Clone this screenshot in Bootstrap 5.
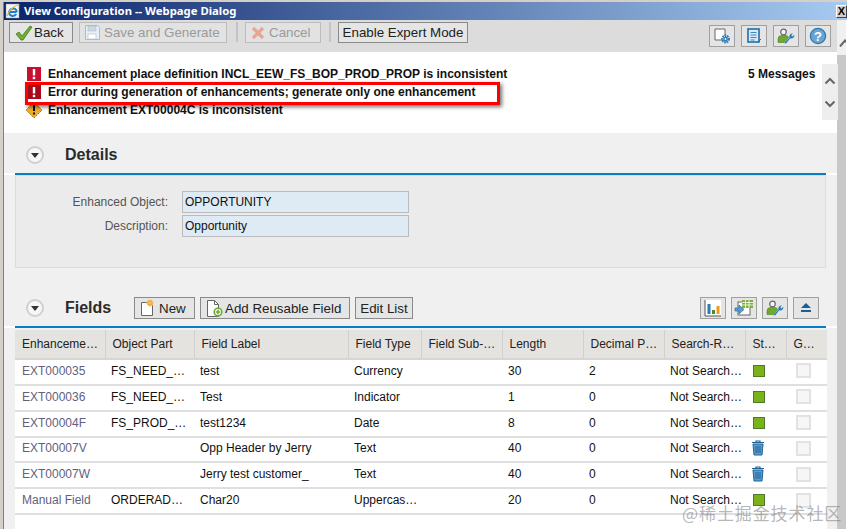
<!DOCTYPE html>
<html lang="en">
<head>
<meta charset="utf-8">
<title>View Configuration</title>
<link href="https://cdn.jsdelivr.net/npm/bootstrap@5.3.0/dist/css/bootstrap.min.css" rel="stylesheet">
<style>
html,body{margin:0;height:529px;overflow:hidden;background:#fff}
body{font-family:"Liberation Sans",Arial,sans-serif;font-size:12px;color:#000}
.shell{height:529px;position:relative;border-top:2px solid #d4d0c8;border-left:3px solid #d4d0c8;overflow:hidden}
.titlebar{height:18px;flex:none;background:linear-gradient(90deg,#0a246a,#a6caf0);color:#fff;font:700 11.3px/18px "Noto Sans","Liberation Sans",sans-serif;padding-left:1px;border-left:1px solid #808080}
.titlebar svg{flex:none;margin-right:3px}
.closebox{width:11px;height:13px;background:#d4d0c8;border:1px solid #fff;border-right-color:#404040;border-bottom-color:#404040;margin-left:auto;color:#000;font:700 11px/11px "Liberation Sans",sans-serif;text-align:center}
.pane{min-width:0;width:834px;flex:none;border-left:1px solid #808080}
.vtrack{flex:none;width:9px;background:#f0f0f0;display:flex;flex-direction:column;overflow:hidden}
.vhead{height:35px;flex:none;padding-top:17px}
.vbody{flex:1;background:#c8c8c8}
.tools{height:32px;background:#dcdcdc;padding:2px 6px 0 5px;align-items:flex-start}
.sapbtn{--bs-btn-padding-x:4px;--bs-btn-padding-y:0;--bs-btn-font-size:13.33px;--bs-btn-line-height:19px;--bs-btn-border-radius:0;--bs-btn-color:#222;--bs-btn-bg:#e5e5e5;--bs-btn-border-color:#8a8a8a;--bs-btn-hover-bg:#e5e5e5;--bs-btn-hover-border-color:#8a8a8a;--bs-btn-hover-color:#222;height:21px;display:inline-flex;align-items:center;gap:3px;white-space:nowrap;font-family:"Liberation Sans",Arial,sans-serif}
.sapbtn.faded{--bs-btn-color:#999;--bs-btn-border-color:#bcbcbc;--bs-btn-disabled-color:#9a9a9a;--bs-btn-disabled-bg:#e2e2e2;--bs-btn-disabled-border-color:#bcbcbc;--bs-btn-disabled-opacity:1}
.btn-back{width:64px;margin-right:6px;gap:0}
.btn-save{width:148px}
.btn-cancel{width:76px}
.btn-expert{width:130px;justify-content:center}
.btn-new{width:61px;gap:2px}
.btn-add{width:150px;gap:1px}
.btn-edit{width:58px;justify-content:center}
.sepbar{width:2px;height:20px;background:#c4c4c4;margin:0 7px 0 8px;flex:none}
.sepfirst{margin-left:9px}
.iconbtn{--bs-btn-padding-x:0;width:26px;height:22px;justify-content:center;--bs-btn-border-color:#a0a0a0}
.sidetools{margin-left:auto;gap:6px;margin-top:3px}
.msgs{height:81px;background:#fff;position:relative;padding:13px 0 0 23px;font-weight:700;line-height:18px;color:#111}
.msgline{height:18px;align-items:center;gap:7px}
.msgline svg{flex:none}
.msgcount{position:absolute;left:744px;top:13px}
.msgscroll{position:absolute;left:818px;top:12px;width:16px;height:56px;background:#eee;display:flex;flex-direction:column;align-items:center;gap:15px;padding-top:13px}
.callout{position:absolute;left:21px;top:30px;width:475px;height:23px;border:3px solid #f00;box-shadow:2px 2px 4px rgba(0,0,0,.55)}
.secthead{background:#f0f0f0;padding-left:22px;align-items:center;gap:21px}
.detailshead{height:40px;padding-top:4px}
.secttitle{font:700 16px/20px "Liberation Sans",Arial,sans-serif;color:#2b2b2b;margin:0}
.bluerule{height:2px;background:#0a7cc4;margin:0 11px;flex:none}
.outer{background:#f0f0f0}
.detailbox{margin:0 11px;height:93px;background:#ebebeb;border:1px solid #dcdcdc;padding-top:15px}
.formline{display:flex;align-items:center;height:22px;margin-bottom:2px}
.formline label{width:152px;text-align:right;color:#555;flex:none}
.valuebox{width:227px;height:22px;margin-left:14px;background:#deeaf4;border:1px solid #bbb;padding:0 2px;line-height:20px;color:#111}
.fieldshead{height:58px;padding-top:22px;position:relative;gap:0}
.fieldshead .secttitle{width:69px;margin-left:21px}
.fieldbtns{gap:5px}
.fieldbtns .sapbtn{height:22px}
.fieldshead .sidetools{margin:0 18px 0 auto;gap:5px}
.gridarea{padding:0 11px;height:201px;background:linear-gradient(90deg,#f0f0f0 11px,#fff 11px,#fff 823px,#f0f0f0 823px)}
.sheet{table-layout:fixed;width:812px;margin:0;--bs-table-bg:transparent;font-size:12px;line-height:14px;border-collapse:collapse}
.sheet th{background:#e5e3df;font-weight:400;height:30px;padding:0 2px 0 7px;border:0;border-right:1px solid #d2d0cc;border-top:2px solid #f0f0f0;border-bottom:2px solid #d8d6d2;color:#222;white-space:nowrap;vertical-align:middle}
.sheet th:last-child{border-right:0}
.sheet td{height:25.85px;padding:0 2px 2px 6px;border:0;border-bottom:2px solid #dfdfdf;white-space:nowrap;vertical-align:middle;color:#111}
.sheet td:first-child{padding-left:7px;color:#5f5f80}
.sheet td.mid{padding-left:8px}
.statusok{display:block;width:12px;height:12px;background:#7ab317;border:1px solid #4f7a2a}
.tickbox{display:block;width:15px;height:15px;background:#f6f6f6;border:2px solid #e2e2e2;margin-left:4px}
.stampmark{position:absolute;left:679px;top:501px;font:17px/20px "Noto Sans CJK SC","Noto Sans",sans-serif;color:rgba(120,120,120,.55);letter-spacing:.9px;white-space:nowrap;pointer-events:none}
.roundtoggle{width:18px;height:18px;border-radius:50%;background:#f7f7f7;border:2px solid #d0d0d0;display:flex;align-items:center;justify-content:center;flex:none}
.roundtoggle i{display:block;width:0;height:0;border:4px solid transparent;border-top:5px solid #333;border-bottom:0}
</style>
</head>
<body>
<div class="shell d-flex flex-column">
  <div class="titlebar d-flex align-items-center">
    <svg width="16" height="16" viewBox="0 0 16 16"><rect x="1" y="1" width="13" height="14" fill="#f4f4f4" stroke="#999" stroke-width=".5"/><path d="M3 9h8M4.200 8.800A4 4 0 0 1 11.500 7.500V9.500M11.300 11A4 4 0 0 1 4 10" fill="none" stroke="#1a7fd6" stroke-width="2"/><path d="M2 13C5 5 11 2 14.500 2" fill="none" stroke="#e9b93a" stroke-width="1.200"/></svg>
    <span>View Configuration -- Webpage Dialog</span>
    <span class="closebox">X</span>
  </div>
  <div class="d-flex flex-grow-1" style="min-height:0">
    <div class="pane">
      <div class="tools d-flex">
        <button class="btn sapbtn btn-back" type="button"><svg width="20" height="18" viewBox="0 0 20 18"><path d="M2 10l3-2 3 4L16 2l2 1-9 13H7z" fill="#6fb12c" stroke="#3d7a1c" stroke-width=".8"/></svg>Back</button>
        <button class="btn sapbtn faded btn-save" type="button" disabled><svg width="17" height="17" viewBox="0 0 17 17"><path d="M1.500 1.500h12l2 2v12h-14z" fill="#e8eff5" stroke="#a9bccb"/><rect x="4" y="2" width="8" height="5" fill="#c9d8e4" stroke="#a9bccb" stroke-width=".6"/><rect x="4" y="10" width="8" height="5" fill="#fff" stroke="#a9bccb" stroke-width=".6"/></svg>Save and Generate</button>
        <span class="sepbar sepfirst"></span>
        <button class="btn sapbtn faded btn-cancel" type="button" disabled><svg width="16" height="16" viewBox="0 0 16 16"><path d="M3 3l10 10M13 3L3 13" stroke="#e8a593" stroke-width="3.200"/></svg>Cancel</button>
        <span class="sepbar"></span>
        <button class="btn sapbtn btn-expert" type="button">Enable Expert Mode</button>
        <div class="sidetools d-flex">
          <button class="btn sapbtn iconbtn" type="button" aria-label="Settings"><svg width="18" height="16" viewBox="0 0 18 16"><path d="M11 12H2V1h10v7" fill="#fff" stroke="#666"/><circle cx="12.500" cy="11" r="3.200" fill="none" stroke="#2a7ab5" stroke-width="2.400" stroke-dasharray="1.600 .7"/><circle cx="12.500" cy="11" r="2.200" fill="#2a7ab5"/><circle cx="12.500" cy="11" r=".9" fill="#fff"/></svg></button>
          <button class="btn sapbtn iconbtn" type="button" aria-label="Notes"><svg width="16" height="16" viewBox="0 0 16 16"><rect x="2" y="1" width="11" height="13" fill="#dbe9f5" stroke="#1f6ea9" stroke-width="1.600"/><path d="M4.500 4.500h6M4.500 7h6M4.500 9.500h6M4.500 12h4" stroke="#3b86bd"/><path d="M12 14l3-3" stroke="#1f6ea9"/></svg></button>
          <button class="btn sapbtn iconbtn" type="button" aria-label="Personalize"><svg width="18" height="17" viewBox="0 0 18 17"><circle cx="6.500" cy="4" r="2.800" fill="#f4f4f4" stroke="#666" stroke-width="1.200"/><path d="M1 14.500V11q0-3.500 3.500-3.500h4.500q2 0 2.500 2L7 14.500z" fill="#6ea92e" stroke="#4c7f1d" stroke-width=".6"/><path d="M7 15l5.500-5.500a3 3 0 0 1 3.500-4l-1.800 1.800 1.300 1.300 1.800-1.800a3 3 0 0 1-4 3.500L9 15.500z" fill="#2a7ab5"/></svg></button>
          <button class="btn sapbtn iconbtn" type="button" aria-label="Help"><svg width="18" height="18" viewBox="0 0 18 18"><circle cx="9" cy="9" r="7.600" fill="#6aa4d4" stroke="#2f78b0" stroke-width="1.300"/><text x="9" y="13.500" text-anchor="middle" font-family="Liberation Sans" font-weight="700" font-size="13" fill="#fff">?</text></svg></button>
        </div>
      </div>
      <div class="msgs">
        <div class="msgline d-flex"><svg width="14" height="14" viewBox="0 0 14 14"><rect width="14" height="14" fill="#c8102e"/><path d="M7 2v6.500" stroke="#fff" stroke-width="2.400"/><rect x="5.800" y="9.800" width="2.400" height="2.400" fill="#fff"/></svg><span>Enhancement place definition INCL_EEW_FS_BOP_PROD_PROP is inconsistent</span></div>
        <div class="msgline d-flex"><svg width="14" height="14" viewBox="0 0 14 14"><rect width="14" height="14" fill="#a60a1c"/><path d="M7 2v6.500" stroke="#fff" stroke-width="2.400"/><rect x="5.800" y="9.800" width="2.400" height="2.400" fill="#fff"/></svg><span>Error during generation of enhancements; generate only one enhancement</span></div>
        <div class="msgline d-flex"><svg width="14" height="18" viewBox="0 0 14 18" style="overflow:visible"><path d="M7 1L15 9 7 17-1 9z" fill="#f0ac2b" stroke="#8a6410" stroke-width=".8" stroke-dasharray="2 1"/><path d="M7 4v6" stroke="#111" stroke-width="2"/><rect x="6" y="11.500" width="2" height="2" fill="#111"/></svg><span>Enhancement EXT00004C is inconsistent</span></div>
        <div class="msgcount">5 Messages</div>
        <div class="msgscroll">
          <svg width="12" height="8" viewBox="0 0 12 8"><path d="M1.500 6.500L6 2l4.500 4.500" fill="none" stroke="#666" stroke-width="2"/></svg>
          <svg width="12" height="8" viewBox="0 0 12 8"><path d="M1.500 1.500L6 6l4.500-4.500" fill="none" stroke="#666" stroke-width="2"/></svg>
        </div>
        <div class="callout"></div>
      </div>
      <div class="d-flex secthead detailshead"><span class="roundtoggle"><i></i></span><h2 class="secttitle">Details</h2></div>
      <div class="bluerule"></div>
      <div class="outer">
        <div class="detailbox">
          <div class="formline"><label>Enhanced Object:</label><div class="valuebox">OPPORTUNITY</div></div>
          <div class="formline"><label>Description:</label><div class="valuebox">Opportunity</div></div>
        </div>
      </div>
      <div class="d-flex secthead fieldshead"><span class="roundtoggle"><i></i></span><h2 class="secttitle">Fields</h2>
        <div class="d-flex fieldbtns">
          <button class="btn sapbtn btn-new" type="button"><svg width="18" height="18" viewBox="0 0 18 18"><path d="M2.500 3.500h8l3 3v10h-11z" fill="#fff" stroke="#666"/><circle cx="11" cy="4" r="3" fill="#f5a623"/><path d="M11 0v8M7 4h8" stroke="#f7c465"/></svg>New</button>
          <button class="btn sapbtn btn-add" type="button"><svg width="19" height="18" viewBox="0 0 19 18"><path d="M2.500 1.500h7l4 4v12h-11z" fill="#fff" stroke="#666"/><path d="M9.500 1.500v4h4" fill="none" stroke="#666"/><circle cx="13" cy="13" r="3.800" fill="#fff" stroke="#6ea92e" stroke-width="1.600"/><path d="M10.800 13h4.400M13 10.800v4.400" stroke="#6ea92e" stroke-width="1.500"/></svg>Add Reusable Field</button>
          <button class="btn sapbtn btn-edit" type="button">Edit List</button>
        </div>
        <div class="sidetools d-flex">
          <button class="btn sapbtn iconbtn" type="button" aria-label="Chart"><svg width="18" height="17" viewBox="0 0 18 17"><rect x="1" y="0" width="16" height="16" fill="#fff"/><path d="M1 0v16h16" fill="none" stroke="#555"/><rect x="3.500" y="4" width="3" height="10" fill="#2a7ab5"/><rect x="8" y="10" width="3" height="4" fill="#4c8a2e"/><rect x="12.500" y="6" width="3" height="8" fill="#ee9a1a"/></svg></button>
          <button class="btn sapbtn iconbtn" type="button" aria-label="Export"><svg width="20" height="18" viewBox="0 0 20 18"><rect x="4" y="3" width="12" height="13" fill="#fff" stroke="#666"/><rect x="8" y="1" width="11" height="8" fill="#7fb03c"/><path d="M8 3.500h11M8 6h11M11.500 1v8M15 1v8" stroke="#fff" stroke-width=".8"/><path d="M1 9h4V6l5 4.500-5 4.500v-3H1z" fill="#5a9bd0" stroke="#2a6fa5" stroke-width=".7"/></svg></button>
          <button class="btn sapbtn iconbtn" type="button" aria-label="Personalize"><svg width="18" height="17" viewBox="0 0 18 17"><circle cx="6.500" cy="4" r="2.800" fill="#f4f4f4" stroke="#666" stroke-width="1.200"/><path d="M1 14.500V11q0-3.500 3.500-3.500h4.500q2 0 2.500 2L7 14.500z" fill="#6ea92e" stroke="#4c7f1d" stroke-width=".6"/><path d="M7 15l5.500-5.500a3 3 0 0 1 3.500-4l-1.800 1.800 1.300 1.300 1.800-1.800a3 3 0 0 1-4 3.500L9 15.500z" fill="#2a7ab5"/></svg></button>
          <button class="btn sapbtn iconbtn" type="button" aria-label="Collapse"><svg width="12" height="10" viewBox="0 0 12 10"><path d="M6 0l5 5H1z" fill="#1c5f96"/><rect x="1" y="7" width="10" height="2" fill="#1c5f96"/></svg></button>
        </div>
      </div>
      <div class="bluerule"></div>
      <div class="gridarea">
        <table class="table sheet">
          <colgroup><col style="width:90px"><col style="width:89px"><col style="width:154px"><col style="width:73px"><col style="width:81px"><col style="width:81px"><col style="width:81px"><col style="width:81px"><col style="width:41px"><col style="width:41px"></colgroup>
          <thead><tr><th>Enhanceme…</th><th>Object Part</th><th>Field Label</th><th>Field Type</th><th>Field Sub-…</th><th>Length</th><th>Decimal P…</th><th>Search-R…</th><th>St…</th><th>G…</th></tr></thead>
          <tbody>
            <tr><td>EXT000035</td><td>FS_NEED_…</td><td>test</td><td>Currency</td><td></td><td>30</td><td>2</td><td>Not Search…</td><td class="mid"><span class="statusok"></span></td><td><span class="tickbox"></span></td></tr>
            <tr><td>EXT000036</td><td>FS_NEED_…</td><td>Test</td><td>Indicator</td><td></td><td>1</td><td>0</td><td>Not Search…</td><td class="mid"><span class="statusok"></span></td><td><span class="tickbox"></span></td></tr>
            <tr><td>EXT00004F</td><td>FS_PROD_…</td><td>test1234</td><td>Date</td><td></td><td>8</td><td>0</td><td>Not Search…</td><td class="mid"><span class="statusok"></span></td><td><span class="tickbox"></span></td></tr>
            <tr><td>EXT00007V</td><td></td><td>Opp Header by Jerry</td><td>Text</td><td></td><td>40</td><td>0</td><td>Not Search…</td><td><svg class="d-block" width="14" height="16" viewBox="0 0 14 16"><path d="M5 2V1h4v1M1 2.500h12" fill="none" stroke="#1d6296" stroke-width="1.200"/><path d="M2 4h10l-1 11H3z" fill="#5c9ccb" stroke="#1d6296"/><path d="M5 6v7M7 6v7M9 6v7" stroke="#1d6296"/></svg></td><td><span class="tickbox"></span></td></tr>
            <tr><td>EXT00007W</td><td></td><td>Jerry test customer_</td><td>Text</td><td></td><td>40</td><td>0</td><td>Not Search…</td><td><svg class="d-block" width="14" height="16" viewBox="0 0 14 16"><path d="M5 2V1h4v1M1 2.500h12" fill="none" stroke="#1d6296" stroke-width="1.200"/><path d="M2 4h10l-1 11H3z" fill="#5c9ccb" stroke="#1d6296"/><path d="M5 6v7M7 6v7M9 6v7" stroke="#1d6296"/></svg></td><td><span class="tickbox"></span></td></tr>
            <tr><td>Manual Field</td><td>ORDERAD…</td><td>Char20</td><td>Uppercas…</td><td></td><td>20</td><td>0</td><td>Not Search…</td><td class="mid"><span class="statusok"></span></td><td><span class="tickbox"></span></td></tr>
          </tbody>
        </table>
      </div>
    </div>
    <div class="vtrack">
      <div class="vhead"><svg class="d-block" width="9" height="10" viewBox="0 0 9 10"><path d="M3 9.500L8 3.500l3 3" fill="none" stroke="#666" stroke-width="2"/></svg></div>
      <div class="vbody"></div>
    </div>
  </div>
  <div class="stampmark">@稀土掘金技术社区</div>
</div>
</body>
</html>
